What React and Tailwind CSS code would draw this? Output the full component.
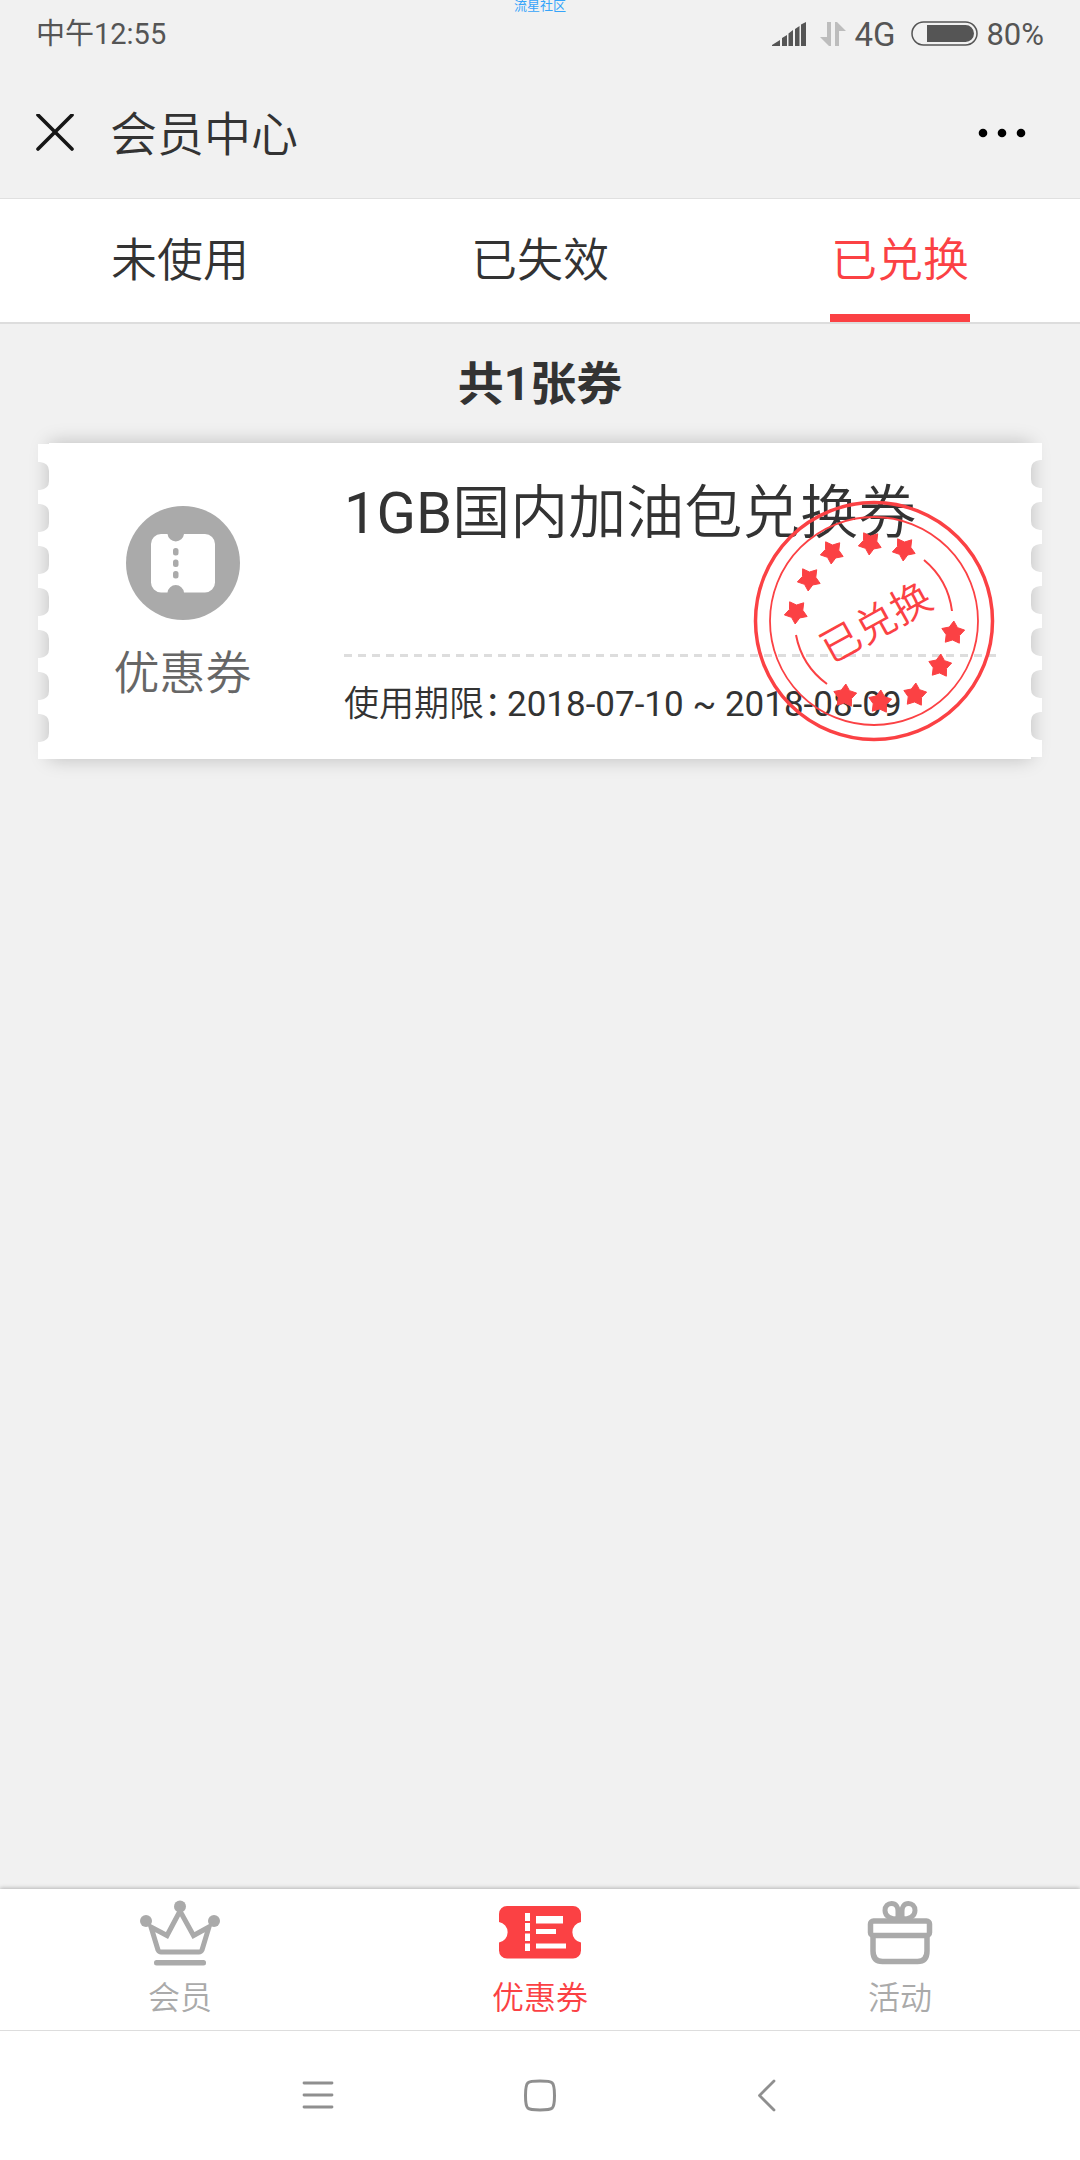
import React from "react";

const TABS = ["未使用", "已失效", "已兑换"];

const STARS = [
  { x: -4, y: -78, flip: true },
  { x: 30, y: -72, flip: true },
  { x: -42, y: -69, flip: true },
  { x: -65, y: -42, flip: true },
  { x: -78, y: -9, flip: true },
  { x: 79, y: 12, flip: false },
  { x: 66, y: 45, flip: false },
  { x: 41, y: 74, flip: false },
  { x: 6, y: 81, flip: false },
  { x: -29, y: 75, flip: false },
];

const STAR_POINTS = Array.from({ length: 10 }, (_, i) => {
  const angle = ((-86 + i * 36) * Math.PI) / 180;
  const radius = i % 2 === 0 ? 12 : 7;
  return `${(radius * Math.cos(angle)).toFixed(2)},${(radius * Math.sin(angle)).toFixed(2)}`;
}).join(" ");

function SignalIcon() {
  return (
    <svg width="34" height="24" viewBox="0 0 34 24" fill="#555" aria-hidden="true">
      <path d="M0 24v-1l8-5v6zM10 24v-8l5-3v11zM16.500 24v-12.500l4.500-3.500v16zM23 24v-17l4.500-3v20zM29 24v-21.500l5-2.500v24z" />
    </svg>
  );
}

function DataArrowsIcon() {
  return (
    <svg width="26" height="24" viewBox="0 0 26 24" fill="#bdbdbd" aria-hidden="true">
      <path d="M7 0h4v24h-2L0 15h7zM15 24V0h2l9 9h-7v15z" />
    </svg>
  );
}

function BatteryIcon() {
  return (
    <svg width="67" height="26" viewBox="0 0 67 26" aria-hidden="true">
      <rect x="1" y="1" width="65" height="23" rx="11.500" fill="none" stroke="#555" strokeWidth="1.500" />
      <path d="M16 4h38.500a8.500 8.500 0 0 1 0 17H16z" fill="#555" />
    </svg>
  );
}

function Teeth({ mirrored }) {
  const start = mirrored ? 17 : 19;
  const top = mirrored ? 0 : 1;
  const bottom = mirrored ? 314 : 316;
  const holes = Array.from({ length: 7 }, (_, i) => start + i * 42)
    .map((y) => `V${y}h2q9 1 9 9v10q0 8 -9 9h-2`)
    .join("");
  return (
    <svg
      className={mirrored ? "relative shrink-0 -scale-x-100" : "relative shrink-0"}
      width="11"
      height="316"
      viewBox="0 0 11 316"
      aria-hidden="true"
    >
      <path d={`M0 ${top}${holes}V${bottom}H11.500V${top}z`} fill="#fff" />
    </svg>
  );
}

function CouponIcon() {
  return (
    <svg width="114" height="114" viewBox="0 0 114 114" aria-hidden="true">
      <circle cx="57" cy="57" r="57" fill="#aaa" />
      <path
        d="M35 28h6.500a8.300 8.300 0 0 0 16.500 0h21a10 10 0 0 1 10 10v38.500a10 10 0 0 1 -10 10h-21a8.300 8.300 0 0 0 -16.500 0h-6.500a10 10 0 0 1 -10 -10v-38.500a10 10 0 0 1 10 -10z"
        fill="#fff"
      />
      <g fill="#aaa">
        <rect x="47" y="42" width="5.500" height="7.500" rx="2.500" />
        <rect x="47" y="53.500" width="5.500" height="7.500" rx="2.500" />
        <rect x="47" y="65" width="5.500" height="7.500" rx="2.500" />
      </g>
    </svg>
  );
}

function Stamp() {
  return (
    <svg
      className="absolute right-9 top-[57px]"
      width="242"
      height="242"
      viewBox="-121 -121 242 242"
      role="img"
      aria-label="已兑换"
    >
      <g fill="none" stroke="#fb4144">
        <circle r="118.500" strokeWidth="3.500" />
        <circle r="104" strokeWidth="1.800" />
        <path d="M50 -61A79 79 0 0 1 78 -10M-78 14A79 79 0 0 0 -47 63" strokeWidth="2" />
      </g>
      {STARS.map((s) => (
        <polygon
          key={`${s.x},${s.y}`}
          points={STAR_POINTS}
          fill="#fb4144"
          stroke="#fb4144"
          strokeLinejoin="round"
          transform={`translate(${s.x} ${s.y}) rotate(${s.flip ? 180 : 0})`}
        />
      ))}
      <text
        className="text-[40px] font-[350]"
        fill="#fb4144"
        textAnchor="middle"
        transform="translate(2 2) rotate(-29)"
        y="14"
      >
        已兑换
      </text>
    </svg>
  );
}

function CrownIcon() {
  return (
    <svg width="82" height="66" viewBox="0 0 82 66" aria-hidden="true">
      <g fill="#aaa">
        <circle cx="7" cy="21" r="6" />
        <circle cx="41" cy="6.500" r="6" />
        <circle cx="75" cy="21" r="6" />
        <rect x="15" y="60" width="52" height="5.500" rx="2.500" />
      </g>
      <path
        d="M12 27L19 50Q20 52 22 52H60Q62 52 63 50L70 27L54.500 35.500L41 11L28 35.500Z"
        fill="none"
        stroke="#aaa"
        strokeWidth="5"
      />
    </svg>
  );
}

function TicketIcon() {
  return (
    <svg width="82" height="66" viewBox="0 0 82 66" aria-hidden="true">
      <path
        d="M8 6H74a8 8 0 0 1 8 8v8a10.400 10.400 0 0 0 0 20.500v8a8 8 0 0 1 -8 8H8a8 8 0 0 1 -8 -8v-8a10.400 10.400 0 0 0 0 -20.500v-8a8 8 0 0 1 8 -8z"
        fill="#fb4144"
      />
      <path
        d="M26 13h5v8h-5zM26 23h5v8h-5zM26 33.500h5v7.500h-5zM26 43.500h5v7.500h-5zM37 16h27v7.500h-27zM37 29h20v5h-20zM37 43.500h30v5h-30z"
        fill="#fff"
      />
    </svg>
  );
}

function GiftIcon() {
  return (
    <svg width="66" height="66" viewBox="0 0 66 66" fill="none" stroke="#aaa" strokeWidth="5.500" aria-hidden="true">
      <path
        d="M31 19C25 19 18 17 18 10.500C18 6 21 3.500 24.500 3.500C29 3.500 31 7 31 11ZM35 19C41 19 48 17 48 10.500C48 6 45 3.500 41.500 3.500C37 3.500 35 7 35 11Z"
        strokeWidth="5"
      />
      <path d="M31 10h4v10h-4z" fill="#aaa" stroke="none" />
      <rect x="3.500" y="21" width="59" height="14.500" rx="3" />
      <path d="M6 35V51Q6 61.500 15.500 61.500H50.500Q60 61.500 60 51V35" />
    </svg>
  );
}

const NAV = [
  { label: "会员", Icon: CrownIcon, active: false },
  { label: "优惠券", Icon: TicketIcon, active: true },
  { label: "活动", Icon: GiftIcon, active: false },
];

export default function App() {
  return (
    <div className="relative flex min-h-screen flex-col bg-[#f1f1f1] font-['Roboto','Noto_Sans_CJK_SC',sans-serif] text-[#333]">
      <div className="absolute inset-x-0 top-0 text-center text-[13px] leading-3 text-[#35a4fa]">流星社区</div>

      <div className="flex h-[68px] items-center justify-between px-9 leading-none text-[#555]">
        <span className="text-[29px]">中午12:55</span>
        <div className="flex items-center">
          <SignalIcon />
          <span className="ml-3.5">
            <DataArrowsIcon />
          </span>
          <span className="ml-2 text-[33px]">4G</span>
          <span className="ml-4 mr-2">
            <BatteryIcon />
          </span>
          <span className="text-[31px]">80%</span>
        </div>
      </div>

      <header className="flex h-[131px] items-center border-b border-[#e0e0e0] pl-9 pr-[54px]">
        <button type="button" aria-label="关闭">
          <svg width="38" height="38" viewBox="0 0 38 38" fill="none" stroke="#161616" strokeWidth="3.600" strokeLinecap="round">
            <path d="M2 1l34 34M36 1L2 35" />
          </svg>
        </button>
        <h1 className="ml-9 flex-1 pt-0.5 text-[47px] font-[350] leading-none">会员中心</h1>
        <button type="button" aria-label="更多">
          <svg width="48" height="10" viewBox="0 0 48 10">
            <circle cx="5" cy="5" r="4.300" />
            <circle cx="24" cy="5" r="4.300" />
            <circle cx="43" cy="5" r="4.300" />
          </svg>
        </button>
      </header>

      <div role="tablist" className="grid h-[125px] grid-cols-3 border-b-2 border-[#ddd] bg-white">
        {TABS.map((tab, i) => (
          <button
            key={tab}
            type="button"
            role="tab"
            aria-selected={i === 2}
            className={
              i === 2
                ? "justify-self-center border-b-8 border-[#fb4144] px-px pt-1.5 text-[46px] font-[350] leading-none text-[#fb4144]"
                : "justify-self-center border-b-8 border-transparent px-px pt-1.5 text-[46px] font-[350] leading-none"
            }
          >
            {tab}
          </button>
        ))}
      </div>

      <main className="flex-1">
        <h2 className="flex h-[119px] items-center justify-center text-[46px] font-bold leading-none">共1张券</h2>

        <article className="mx-[38px] flex">
          <div className="z-10">
            <Teeth />
          </div>
          <div className="relative flex h-[316px] flex-1 bg-white shadow-[0_0_18px_rgba(0,0,0,0.22)]">
            <div className="flex w-[267px] shrink-0 flex-col items-center pt-[63px]">
              <CouponIcon />
              <span className="mt-[30px] text-[46px] font-[350] leading-none text-[#666]">优惠券</span>
            </div>
            <div className="ml-7 mr-[30px] flex flex-1 flex-col">
              <h3 className="h-[211px] whitespace-nowrap pt-10 text-[58px] font-[350] leading-[60px]">
                <span className="font-normal">1GB</span>国内加油包兑换券
              </h3>
              <div className="h-[3px] bg-[repeating-linear-gradient(90deg,#ddd_0_8px,transparent_8px_14px)]" />
              <p className="mt-7 flex whitespace-nowrap text-[35px] leading-10">
                <span className="w-[163px] font-[350]">使用期限：</span>
                <span className="relative">2018-07-10 ~ 2018-08-09</span>
              </p>
            </div>
            <Stamp />
          </div>
          <div className="z-10">
            <Teeth mirrored />
          </div>
        </article>
      </main>

      <nav className="grid h-[142px] grid-cols-3 border-b border-[#ddd] bg-white shadow-[0_-1px_4px_rgba(0,0,0,0.25)]">
        {NAV.map(({ label, Icon, active }) => (
          <a key={label} href="#" className="flex flex-col items-center pt-[11px]">
            <Icon />
            <span
              className={
                active
                  ? "mt-4 text-[32px] font-[350] leading-none text-[#fb4144]"
                  : "mt-4 text-[32px] font-[350] leading-none text-[#aaa]"
              }
            >
              {label}
            </span>
          </a>
        ))}
      </nav>

      <div className="flex h-[129px] items-center justify-center gap-44 bg-white">
        <button type="button" aria-label="菜单">
          <svg width="48" height="48" viewBox="0 0 48 48" fill="none" stroke="#8f8f8f" strokeWidth="2.800" strokeLinecap="round">
            <path d="M12 11h28M12 23h28M12 35h28" />
          </svg>
        </button>
        <button type="button" aria-label="主屏幕">
          <svg width="48" height="48" viewBox="0 0 48 48" fill="none" stroke="#8f8f8f" strokeWidth="3">
            <path d="M24 9C37 9 38.500 9 38.500 23.500S37 38 24 38S9.500 38 9.500 23.500S11 9 24 9Z" />
          </svg>
        </button>
        <button type="button" aria-label="返回">
          <svg width="48" height="48" viewBox="0 0 48 48" fill="none" stroke="#8f8f8f" strokeWidth="2.800" strokeLinecap="round" strokeLinejoin="round">
            <path d="M34 9L19.500 23.500L34 38" />
          </svg>
        </button>
      </div>
    </div>
  );
}
